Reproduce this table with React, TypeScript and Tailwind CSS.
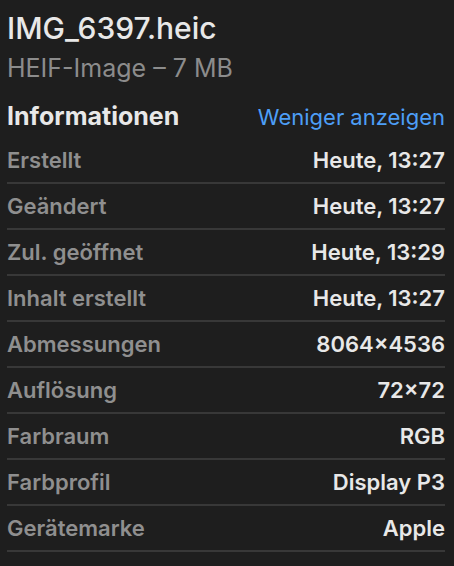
const rows: [string, string][] = [
  ["Erstellt", "Heute, 13:27"],
  ["Geändert", "Heute, 13:27"],
  ["Zul. geöffnet", "Heute, 13:29"],
  ["Inhalt erstellt", "Heute, 13:27"],
  ["Abmessungen", "8064×4536"],
  ["Auflösung", "72×72"],
  ["Farbraum", "RGB"],
  ["Farbprofil", "Display P3"],
  ["Gerätemarke", "Apple"],
];

export default function App() {
  return (
    <div className="min-h-screen bg-[#1e1e1e] font-['Inter',sans-serif] pl-[7px] pr-[9px] pt-[10px]">
      {/* Kopf */}
      <h1 className="text-[30px] leading-[36px] text-[#e8e8e8] font-medium">IMG_6397.heic</h1>
      <p className="text-[25px] leading-[30px] mt-[7px] text-[#8c8c8c]">HEIF-Image – 7 MB</p>

      <div className="flex items-center justify-between mt-[19px] h-[30px]">
        <h2 className="text-[25px] font-bold text-[#e8e8e8]">Informationen</h2>
        <span className="text-[22px] text-[#4d9ef7]">Weniger anzeigen</span>
      </div>

      {/* Infos */}
      <div className="mt-[6px]">
        {rows.map(([label, value]) => (
          <div
            key={label}
            className="flex items-center justify-between h-[46px] border-b-2 border-[#383838] text-[22px]"
          >
            <span className="font-semibold text-[#8f8f8f]">{label}</span>
            <span className="font-semibold text-[#e8e8e8]">{value}</span>
          </div>
        ))}
      </div>
    </div>
  );
}
